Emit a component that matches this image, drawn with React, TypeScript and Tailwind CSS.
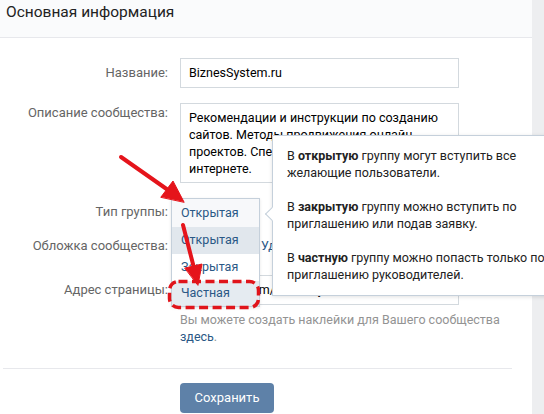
const labelCls = 'w-[168px] shrink-0 text-right text-[13px] text-[#656565]'

const Row = ({ label, children, className = '' }: { label: string; children?: React.ReactNode; className?: string }) => (
  <div className={`flex items-center gap-3 ${className}`}>
    <div className={labelCls}>{label}</div>
    {children}
  </div>
)

const Annotations = () => (
  <svg className="pointer-events-none absolute left-0 top-0" width={544} height={414} aria-hidden>
    <g stroke="#e5141b" strokeWidth={4} strokeLinecap="round" fill="#e5141b">
      <line x1={121} y1={157} x2={168} y2={190} />
      <polygon points="161,197 173,181 184,202" strokeWidth={1} />
      <line x1={183} y1={225} x2={194} y2={268} />
      <polygon points="185,268 202,264 198,285" strokeWidth={1} />
    </g>
    <rect x={169.5} y={281.5} width={89} height={26} rx={9} fill="none" stroke="#e0141b" strokeWidth={3.5} strokeDasharray="9 4.5" />
  </svg>
)

const App = () => {
  return (
    <div className="relative h-[414px] w-[544px] overflow-hidden bg-[#edeef0] font-['Roboto',sans-serif] text-[12.5px] text-[#222]">
      <div className="h-full w-[532px] bg-white">
        <div className="h-[38px] border-b border-[#e7e8ec] bg-[#fafbfc] px-[6px] pt-[2px] text-[15.5px] leading-[20px] text-[#222]">
          Основная информация
        </div>

        <div className="pt-5">
          <Row label="Название:">
            <div className="flex h-[30px] w-[279px] items-center border border-[#d3d9de] px-2 text-black">BiznesSystem.ru</div>
          </Row>

          <Row label="Описание сообщества:" className="mt-[15px] !items-start">
            <div className="h-[80px] w-[279px] border border-[#d3d9de] px-2 pt-[5px] leading-[17px] text-black">
              Рекомендации и инструкции по созданию
              <br />
              сайтов. Методы продвижения онлайн
              <br />
              проектов. Специалисты в работе в
              <br />
              интернете.
            </div>
          </Row>

          <Row label="Тип группы:" className="mt-[15px] h-[28px]">
            <div className="h-[28px] w-[88px]" />
          </Row>

          <Row label="Обложка сообщества:" className="mt-[5px] h-[30px]">
            <div className="flex gap-2 text-[#2a5885]">
              <span className="ml-[81px]">Удалить</span>
            </div>
          </Row>

          <Row label="Адрес страницы:" className="mt-[14px]">
            <div className="flex h-[30px] w-[279px] items-center border border-[#d3d9de] px-2 text-black">
              https://vk.com/biznessystem
            </div>
          </Row>

          <div className="ml-[180px] mt-[6px] w-[330px] leading-[17px] text-[#939393]">
            Вы можете создать наклейки для Вашего сообщества
            <br />
            <span className="text-[#2a5885]">здесь</span>.
          </div>

          <div className="ml-[3px] mt-[23px] h-px w-[509px] bg-[#e7e8ec]" />

          <div className="ml-[180px] mt-[14px]">
            <button type="button" className="h-[30px] w-[94px] rounded-[4px] bg-[#5e81a8] text-[13px] text-white">
              Сохранить
            </button>
          </div>
        </div>
      </div>

      {/* opened select */}
      <div className="absolute left-[171px] top-[198px] w-[89px] border border-[#c5d0db] bg-white shadow-[0_1px_3px_rgba(0,0,0,0.1)]">
        <div className="flex h-[28px] items-center bg-[#f7f8fa] px-[9px] text-[#2a5885]">Открытая</div>
        <div className="flex h-[27px] items-center bg-[#e1e7ed] px-[9px] text-[#2a5885]">Открытая</div>
        <div className="flex h-[27px] items-center bg-white px-[9px] text-[#2a5885]">Закрытая</div>
        <div className="flex h-[25px] items-center bg-[#e5ebf1] px-[9px] text-[#2a5885]">Частная</div>
      </div>

      {/* tooltip */}
      <div className="absolute left-[272px] top-[135px] h-[161px] w-[290px] border border-[#c5d0db] bg-white py-[11px] pl-[14px] leading-[17px] text-[#222] shadow-[0_1px_4px_rgba(0,0,0,0.12)]">
        <div className="absolute -left-[6px] top-[73px] h-[10px] w-[10px] rotate-45 border-b border-l border-[#c5d0db] bg-white" />
        <p>
          В <b>открытую</b> группу могут вступить все
          <br />
          желающие пользователи.
        </p>
        <p className="mt-[17px]">
          В <b>закрытую</b> группу можно вступить по
          <br />
          приглашению или подав заявку.
        </p>
        <p className="mt-[17px] whitespace-nowrap">
          В <b>частную</b> группу можно попасть только по
          <br />
          приглашению руководителей.
        </p>
      </div>

      <Annotations />
    </div>
  )
}

export default App
